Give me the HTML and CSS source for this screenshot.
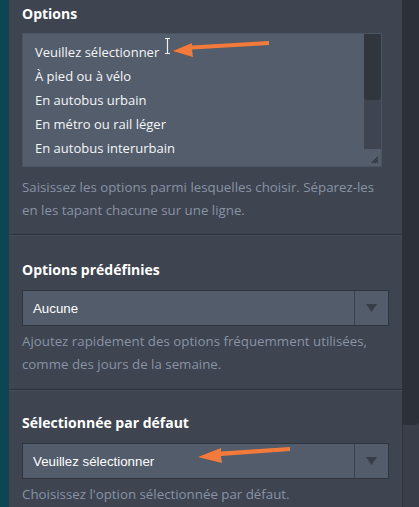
FILE: index.html
```html
<!DOCTYPE html>
<html lang="fr">
<head>
<meta charset="utf-8">
<title>Options</title>
<link rel="stylesheet" href="styles.css">
</head>
<body>
<div class="strip"></div>
<main class="panel">
  <section class="field first">
    <h2 class="label">Options</h2>
    <div class="textbox">
      <div class="lines">
        <div>Veuillez sélectionner</div>
        <div>À pied ou à vélo</div>
        <div>En autobus urbain</div>
        <div>En métro ou rail léger</div>
        <div>En autobus interurbain</div>
      </div>
      <div class="vscroll"><div class="vthumb"></div></div>
      <svg class="grip" width="8" height="8" viewBox="0 0 8 8"><path d="M7 1 L1 7 M7 3.5 L3.5 7 M7 6 L6 7" stroke="#2f343c" stroke-width="1.2"/></svg>
    </div>
    <p class="help">Saisissez les options parmi lesquelles choisir. Séparez-les en les tapant chacune sur une ligne.</p>
  </section>
  <section class="field second">
    <h2 class="label">Options prédéfinies</h2>
    <div class="select">
      <span class="value">Aucune</span>
      <span class="caret"><svg width="11" height="8" viewBox="0 0 11 8"><path d="M0 0 H11 L5.5 8 Z" fill="#383e48"/></svg></span>
    </div>
    <p class="help">Ajoutez rapidement des options fréquemment utilisées, comme des jours de la semaine.</p>
  </section>
  <section class="field third">
    <h2 class="label">Sélectionnée par défaut</h2>
    <div class="select">
      <span class="value">Veuillez sélectionner</span>
      <span class="caret"><svg width="11" height="8" viewBox="0 0 11 8"><path d="M0 0 H11 L5.5 8 Z" fill="#383e48"/></svg></span>
    </div>
    <p class="help">Choisissez l'option sélectionnée par défaut.</p>
  </section>
</main>
<div class="pagescroll"><div class="pagethumb"></div></div>
<svg class="annot" width="419" height="507" viewBox="0 0 419 507">
  <g stroke="#f0f0f0" stroke-width="1.2" fill="none">
    <path d="M165 38.5 H170 M167.5 38.5 V53.5 M165 53.5 H170"/>
  </g>
  <g fill="#f47a3c">
    <path d="M269 41 L269 45 L192 49.5 L193 57 L173 51 L192 43 L192 45.5 Z"/>
    <path d="M290 447 L290 451 L221 456 L222 463 L198 457 L221 448 L221 451.5 Z"/>
  </g>
</svg>
</body>
</html>
```
FILE: styles.css
```css
html, body {
  margin: 0;
  padding: 0;
}
body {
  width: 419px;
  height: 507px;
  overflow: hidden;
  display: flex;
  background: #3e4450;
  font-family: "Open Sans", "Noto Sans", sans-serif;
  position: relative;
}
.strip {
  width: 9px;
  flex: none;
  background: #0b4652;
}
.panel {
  width: 393px;
  flex: none;
  background: #3e4450;
}
.field {
  padding: 24px 0 14px 13px;
  border-top: 1px solid #2e333b;
  box-shadow: inset 0 1px 0 #474d59;
}
.field.first {
  padding-top: 4px;
  padding-bottom: 13px;
  border-top: none;
  box-shadow: none;
}
.field.second {
  padding-top: 25px;
}
.field.third {
  padding-top: 23px;
}
.label {
  margin: 0 0 10px;
  font-size: 14px;
  line-height: 20px;
  font-weight: 700;
  color: #ffffff;
}
.first .label {
  margin-bottom: 9px;
}
.textbox {
  position: relative;
  box-sizing: border-box;
  width: 360px;
  height: 134px;
  background: #535d6c;
  border: 1px solid #4a5361;
  display: flex;
}
.lines {
  flex: 1;
  padding: 6px 0 0 12px;
  font-size: 13px;
  line-height: 24px;
  color: #f4f6f8;
}
.vscroll {
  width: 17px;
  height: 115px;
  background: #3f4550;
  flex: none;
}
.vthumb {
  height: 66px;
  background: #31363e;
  border-radius: 0 0 3px 3px;
}
.grip {
  position: absolute;
  right: 2px;
  bottom: 2px;
}
.help {
  margin: 9px 0 0;
  width: 356px;
  font-size: 13.3px;
  line-height: 22.5px;
  color: #8893a5;
}
.select {
  box-sizing: border-box;
  width: 367px;
  height: 36px;
  background: #525c6b;
  border: 1px solid #2f343d;
  display: flex;
  align-items: center;
}
.value {
  flex: 1;
  padding-left: 10px;
  font-family: "Liberation Sans", Arial, sans-serif;
  font-size: 13.3px;
  color: #ffffff;
}
.caret {
  width: 33px;
  align-self: stretch;
  border-left: 1px solid #3b414c;
  display: flex;
  align-items: center;
  justify-content: center;
}
.field .select + .help {
  margin-top: 4px;
}
.pagescroll {
  width: 17px;
  flex: none;
  background: #393e48;
  border-left: 1px solid #30343c;
  box-sizing: border-box;
}
.pagethumb {
  height: 425px;
  margin-left: -1px;
  background: #2c3038;
  border-radius: 0 0 4px 4px;
}
.annot {
  position: absolute;
  left: 0;
  top: 0;
  pointer-events: none;
}
```
